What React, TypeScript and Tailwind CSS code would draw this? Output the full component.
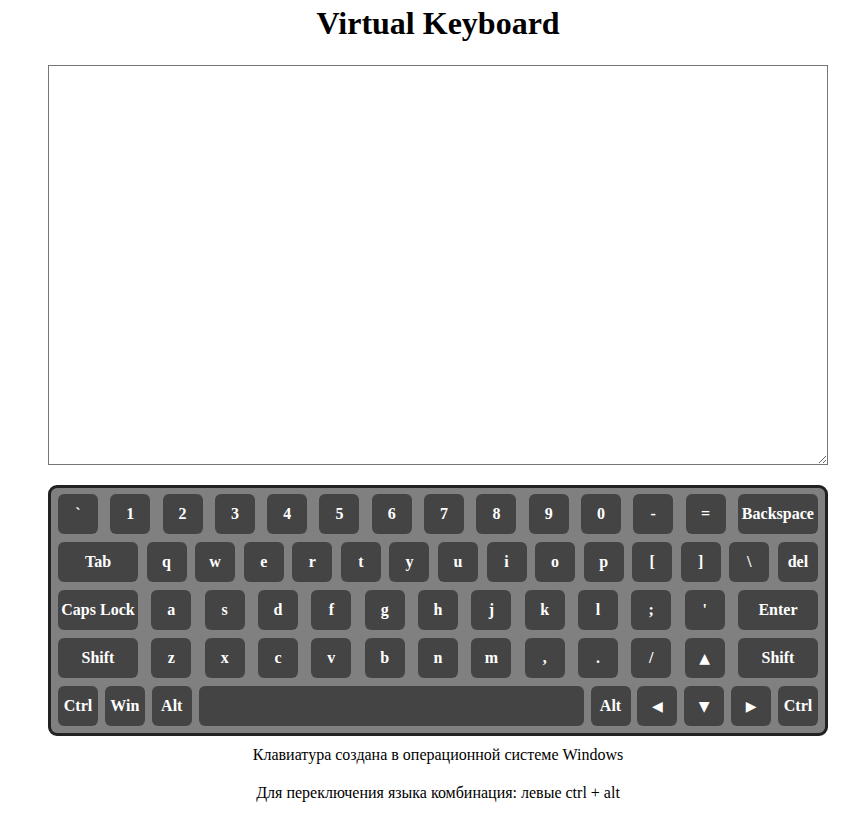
import React from "react";

const K = ({ label, w = "w-[40px]", sym = false }: { label: string; w?: string; sym?: boolean }) => (
  <div
    className={`${w} h-[40px] shrink-0 rounded-[6px] bg-[#444444] text-white font-bold text-[16px] flex items-center justify-center whitespace-nowrap`}
  >
    {sym ? (
      <span className="text-[14px] font-normal" style={{ fontFamily: '"DejaVu Sans", sans-serif' }}>
        {label}
      </span>
    ) : (
      label
    )}
  </div>
);

export default function App() {
  const row1 = ["`", "1", "2", "3", "4", "5", "6", "7", "8", "9", "0", "-", "="];
  const row2 = ["q", "w", "e", "r", "t", "y", "u", "i", "o", "p", "[", "]", "\\", "del"];
  const row3 = ["a", "s", "d", "f", "g", "h", "j", "k", "l", ";", "'"];
  const row4 = ["z", "x", "c", "v", "b", "n", "m", ",", ".", "/"];
  return (
    <div
      className="w-[848px] min-h-[817px] bg-white text-black flex flex-col items-center pl-[28px] box-border"
      style={{ fontFamily: '"Liberation Serif", "Times New Roman", serif' }}
    >
      <h1 className="mt-[5px] text-[32px] font-bold leading-[37px]">Virtual Keyboard</h1>
      <textarea className="mt-[23px] w-[780px] h-[400px] border border-[#767676] bg-white block" />
      <div className="mt-[20px] w-[780px] border-[3px] border-[#222222] rounded-[9px] bg-[#808080] pt-[6px] pb-[7px] px-[7px] flex flex-col gap-[8px]">
        <div className="flex justify-between">
          {row1.map((k) => (
            <K key={k} label={k} />
          ))}
          <K label="Backspace" w="w-[80px]" />
        </div>
        <div className="flex justify-between">
          <K label="Tab" w="w-[80px]" />
          {row2.map((k) => (
            <K key={k} label={k} />
          ))}
        </div>
        <div className="flex justify-between">
          <K label="Caps Lock" w="w-[80px]" />
          {row3.map((k) => (
            <K key={k} label={k} />
          ))}
          <K label="Enter" w="w-[80px]" />
        </div>
        <div className="flex justify-between">
          <K label="Shift" w="w-[80px]" />
          {row4.map((k) => (
            <K key={k} label={k} />
          ))}
          <K label="▲" sym />
          <K label="Shift" w="w-[80px]" />
        </div>
        <div className="flex justify-between">
          <K label="Ctrl" />
          <K label="Win" />
          <K label="Alt" />
          <div className="w-[385px] h-[40px] shrink-0 rounded-[6px] bg-[#444444]" />
          <K label="Alt" />
          <K label="◀" sym />
          <K label="▼" sym />
          <K label="▶" sym />
          <K label="Ctrl" />
        </div>
      </div>
      <p className="mt-[10px] text-[16px] leading-[18px]">Клавиатура создана в операционной системе Windows</p>
      <p className="mt-[20px] text-[16px] leading-[18px]">Для переключения языка комбинация: левые ctrl + alt</p>
    </div>
  );
}
